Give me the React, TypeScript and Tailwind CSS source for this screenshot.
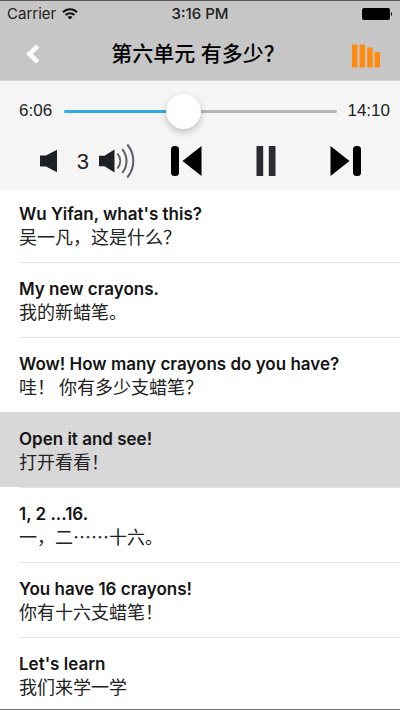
import { useState } from "react";
import type { CSSProperties } from "react";
import clsx from "clsx";

const TOTAL_SECONDS = 850;

const lines = [
  { en: "Wu Yifan, what's this?", zh: "吴一凡，这是什么？" },
  { en: "My new crayons.", zh: "我的新蜡笔。" },
  { en: "Wow! How many crayons do you have?", zh: "哇！ 你有多少支蜡笔？" },
  { en: "Open it and see!", zh: "打开看看！" },
  { en: "1, 2 ...16.", zh: "一，二……十六。" },
  { en: "You have 16 crayons!", zh: "你有十六支蜡笔！" },
  { en: "Let's learn", zh: "我们来学一学" },
];

function formatTime(seconds: number) {
  return `${Math.floor(seconds / 60)}:${String(seconds % 60).padStart(2, "0")}`;
}

// Carrier, clock and battery.
function StatusBar() {
  return (
    <div className="grid h-[26px] grid-cols-3 items-center px-[7px] text-[15px] text-[#222]">
      <div className="flex items-center gap-[6px]">
        <span>Carrier</span>
        <svg className="h-3 w-4" viewBox="0 0 16 12" fill="none" stroke="#111" strokeWidth="2">
          <path d="M1 4.2a10 10 0 0 1 14 0" />
          <path d="M3.6 7a6.2 6.2 0 0 1 8.8 0" />
          <path d="M8 11.6 5.5 9.1a3.6 3.6 0 0 1 5 0Z" fill="#111" stroke="none" />
        </svg>
      </div>
      <span className="text-center font-medium">3:16 PM</span>
      <svg className="h-3 w-[31px] justify-self-end" viewBox="0 0 31 12">
        <rect width="28" height="12" rx="2" />
        <path d="M29 4a2.4 2.4 0 0 1 0 4Z" />
      </svg>
    </div>
  );
}

function Header() {
  return (
    <header className="border-t border-b border-t-[#555] border-b-[#d2d2d2] bg-[#c6c6c6]">
      <StatusBar />
      <div className="flex h-[53px] items-center justify-between">
        <button type="button" aria-label="Back" className="flex h-11 w-[60px] items-center pl-[26px]">
          <svg className="h-5 w-[14px]" viewBox="0 0 14 20" fill="none" stroke="#fff" strokeWidth="4.6">
            <path d="M11.6 2 3.6 10l8 8" />
          </svg>
        </button>
        <h1 lang="zh-CN" className="text-[21px] font-medium">
          第六单元 有多少？
        </h1>
        <button type="button" aria-label="Playlist" className="flex h-11 w-16 items-center justify-end pt-1 pr-5">
          <svg className="h-6 w-7" viewBox="0 0 28 24" fill="#ff8a0c">
            <rect x="0" y="0.5" width="5.4" height="23" rx="0.6" />
            <rect x="7.6" y="0.5" width="5.4" height="23" rx="0.6" />
            <rect x="15.2" y="3.5" width="5.4" height="20" rx="0.6" />
            <rect x="22.6" y="8" width="5.4" height="15.5" rx="0.6" />
          </svg>
        </button>
      </div>
    </header>
  );
}

function Player() {
  const [position, setPosition] = useState(366);
  const [volume, setVolume] = useState(3);
  const [playing, setPlaying] = useState(true);
  const played = { "--played": `${(position / TOTAL_SECONDS) * 100}%` } as CSSProperties;

  return (
    <section className="bg-[#f5f5f5] font-['Liberation_Sans',sans-serif]">
      <div className="flex h-[60px] items-center gap-[10px] pr-[10px] pl-[19px] text-[17px] text-[#222]">
        <span className="w-[35px]">{formatTime(position)}</span>
        <input
          type="range"
          aria-label="Position"
          min={0}
          max={TOTAL_SECONDS}
          value={position}
          onChange={(e) => setPosition(Number(e.target.value))}
          style={played}
          className="h-9 min-w-0 flex-1 appearance-none bg-transparent [&::-webkit-slider-runnable-track]:h-[3px] [&::-webkit-slider-runnable-track]:rounded-full [&::-webkit-slider-runnable-track]:bg-[linear-gradient(to_right,#35aae0_var(--played),#b6b6b6_var(--played))] [&::-webkit-slider-thumb]:-mt-4 [&::-webkit-slider-thumb]:size-[35px] [&::-webkit-slider-thumb]:appearance-none [&::-webkit-slider-thumb]:rounded-full [&::-webkit-slider-thumb]:bg-white [&::-webkit-slider-thumb]:shadow-[0_3px_7px_rgba(0,0,0,0.22)]"
        />
        <span className="w-[43px] text-right">{formatTime(TOTAL_SECONDS)}</span>
      </div>

      <div className="flex h-[49px] items-start pr-[15px] pl-[39px]">
        <div className="flex h-10 w-[108px] items-center">
          <button type="button" aria-label="Volume down" onClick={() => setVolume(Math.max(0, volume - 1))}>
            <svg className="h-6 w-[18px]" viewBox="0 0 18 24" fill="#1d2126">
              <path d="M1 6.5h6L18 .8v22.4L7 17.5H1Z" />
            </svg>
          </button>
          <span className="w-[41px] pr-[9px] text-right text-[22px] text-[#222]">{volume}</span>
          <button type="button" aria-label="Volume up" onClick={() => setVolume(volume + 1)}>
            <svg className="h-9 w-[37px]" viewBox="0 0 37 36" fill="none" stroke="#5b5e63" strokeWidth="2">
              <path d="M1 12.8h5.5L16.5 6.5v23L6.5 23.2H1Z" fill="#1d2126" stroke="none" />
              <path d="M19.5 10.5c3.6 4.6 3.6 10.4 0 15" />
              <path d="M24.3 6.2c5.6 7 5.6 16.6 0 23.6" />
              <path d="M29.3 1.5c8 9.6 8 23.4 0 33" />
            </svg>
          </button>
        </div>
        <div className="grid h-10 flex-1 grid-cols-3 place-items-center">
          <button type="button" aria-label="Previous">
            <svg className="h-8 w-[31px]" viewBox="0 0 31 32">
              <rect x="0" y="1" width="8" height="30" rx="3.5" />
              <path d="M30.5 1v30L11.5 16Z" />
            </svg>
          </button>
          <button type="button" aria-label={playing ? "Pause" : "Play"} onClick={() => setPlaying(!playing)}>
            <svg className="h-8 w-5" viewBox="0 0 20 32" fill="#2a2b31">
              {playing ? <path d="M.5 1h6.7v30H.5ZM12.8 1h6.7v30h-6.7Z" /> : <path d="M1 1v30l18-15Z" />}
            </svg>
          </button>
          <button type="button" aria-label="Next">
            <svg className="h-8 w-[31px]" viewBox="0 0 31 32">
              <path d="M.5 1v30l19-15Z" />
              <rect x="23" y="1" width="8" height="30" rx="3.5" />
            </svg>
          </button>
        </div>
      </div>
    </section>
  );
}

// Each sentence with its translation, the current one shaded.
function Transcript() {
  const [current, setCurrent] = useState(3);

  return (
    <ul className="flex-1 border-b border-[#777] bg-white">
      {lines.map((line, index) => (
        <li key={line.en} className={clsx("group pl-[19px]", index === current && "bg-[#d8d8d8]")}>
          <button
            type="button"
            onClick={() => setCurrent(index)}
            className={clsx(
              "block w-full border-t pt-[15px] pb-[15px] text-left group-first:border-t-0 group-first:pt-[13px] group-last:pb-3",
              index === current ? "border-[#d8d8d8]" : "border-[#e4e4e4]",
            )}
          >
            <span className="block text-[17px] leading-[22px] font-semibold text-[#151515]">{line.en}</span>
            <span
              lang="zh-CN"
              className="block font-['Noto_Sans_CJK_SC',sans-serif] text-[18px] leading-[22px] text-[#222]"
            >
              {line.zh}
            </span>
          </button>
        </li>
      ))}
    </ul>
  );
}

export default function App() {
  return (
    <main className="flex min-h-screen flex-col bg-white font-['Inter','Noto_Sans_CJK_SC',sans-serif] text-black">
      <Header />
      <Player />
      <Transcript />
    </main>
  );
}
